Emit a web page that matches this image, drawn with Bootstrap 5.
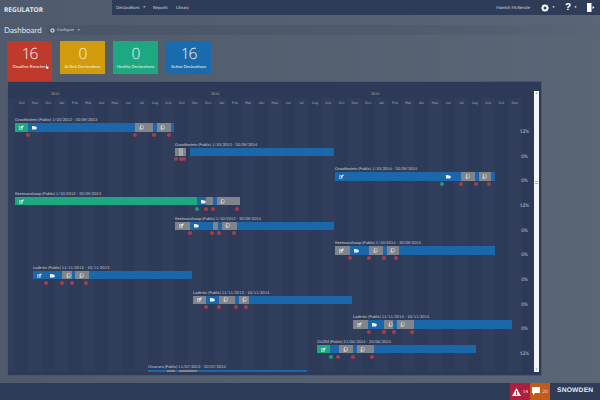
<!DOCTYPE html>
<html lang="en">
<head>
    <meta charset="UTF-8">
    <meta name="viewport" content="width=device-width, initial-scale=1.0">
    <title>Regulator Dashboard</title>
    <link href="https://cdn.jsdelivr.net/npm/bootstrap@5.3.0/dist/css/bootstrap.min.css" rel="stylesheet">
    <style>
        body {
            font-family: Lato, "Liberation Sans", sans-serif;
            text-rendering: geometricPrecision;
            background: linear-gradient(90deg, #4f5a6c, #5a6576);
            color: #d5dae2;
            width: 600px;
            height: 400px;
            overflow: hidden;
        }
        .top-bar { height: 15px; }
        .brand-name {
            width: 112px;
            padding-left: 4px;
            font-family: "Open Sans", sans-serif;
            font-size: 6.5px;
            font-weight: 700;
            line-height: 19px;
            color: #e4e7ec;
        }
        .top-menu {
            background: #2f3c57;
            font-size: 4.3px;
            line-height: 15px;
            color: #cdd3dc;
            padding-left: 4px;
        }
        .menu-first { width: 37px; }
        .menu-second { width: 23px; }
        .caret-down { font-size: 3px; vertical-align: 1px; margin-left: 3px; }
        .user-name { margin-right: 11px; }
        .top-icons { width: 59px; color: #fff; }
        .help-mark { font-size: 10px; font-weight: 700; line-height: 15px; margin-left: 10px; font-family: "Liberation Sans", sans-serif; }
        .exit-mark { margin-left: 10px; }
        .title-row { margin-top: 10px; height: 10px; }
        .page-title {
            width: 47px;
            padding-left: 4px;
            font-size: 7.9px;
            line-height: 10px;
            color: #e2e5ea;
        }
        .config-strip {
            padding-left: 3px;
            background: linear-gradient(90deg, #4a5568, #4f5a6c 60%, #59647500);
            font-size: 4px;
            line-height: 10px;
            color: #c8ced8;
        }
        .config-gear { margin-right: 2px; }
        .tile-row { margin: 6px 0 0 7px; gap: 8px; height: 40px; }
        .stat-tile {
            width: 45px;
            height: 33px;
            color: #f4f1e8;
            text-align: center;
            padding-top: 2px;
        }
        .stat-tile .stat-num { font-family: "Open Sans", sans-serif; font-size: 15.5px; letter-spacing: -1px; line-height: 20px; font-weight: 300; }
        .stat-tile .stat-text { font-size: 4.1px; line-height: 7px; white-space: nowrap; }
        .tile-red { background: #c03a2b; height: 40px; position: relative; }
        .tile-gold { background: #d09c0e; }
        .tile-green { background: #1ea881; }
        .tile-blue { background: #196bae; }
        .hand-cursor { position: absolute; left: 38px; top: 22px; width: 4px; height: 7px; }
        .chart-box {
            margin-left: 7px;
            width: 535px;
            height: 295px;
            border: 1px solid #8c3d4c;
            background: #2d3a57;
        }
        .chart-main { width: 526px; }
        .year-row { height: 16px; font-size: 3.6px; line-height: 24px; color: #a9b1c0; padding-left: 43px; }
        .year-cell { width: 160px; }
        .plot-area {
            height: 274px;
            overflow: hidden;
            background: repeating-linear-gradient(90deg, #2d3a58 7px 20.33px, #303e5c 20.33px 33.67px) 0 0 / 514px 100% no-repeat;
        }
        .month-row { height: 19px; padding-left: 7px; font-size: 3.6px; line-height: 10px; color: #a0a8b8; }
        .month-cell { width: 13.33px; text-align: center; flex: none; }
        .gantt-row { height: 24.67px; }
        .gantt-track { width: 507px; }
        .gantt-pct { width: 19px; text-align: center; font-size: 4.8px; line-height: 6px; padding-top: 12px; color: #c2c8d2; }
        .gantt-label { font-size: 3.98px; line-height: 6px; white-space: nowrap; color: #c9ced7; }
        .gantt-bar { height: 8.5px; background: #1a67ab; }
        .gantt-seg { height: 100%; flex: none; padding-left: 3.5px; color: #eef1f5; }
        .gantt-seg svg { display: block; width: 5px; height: 5px; margin-top: 1.75px; }
        .seg-g { background: #1ea881; }
        .seg-b { background: #1a67ab; }
        .seg-y { background: #80848b; }
        .seg-d { background: #2d3a57; }
        .seg-l { background: #a5a8ad; }
        .dot-strip { position: relative; height: 4px; margin-top: 1.25px; }
        .gantt-dot { position: absolute; top: 0; width: 4px; height: 4px; margin-left: -2px; border-radius: 50%; background: #a83c4a; }
        .dot-ok { background: #1f9a7c; }
        .scroll-rail {
            width: 5px;
            margin: 9px 2px 3px 0;
            background: #f4f5f7;
            color: #6d7482;
            font-size: 3px;
            line-height: 5px;
            text-align: center;
        }
        .scroll-grip { width: 3px; height: 4px; margin-top: 85px; background: repeating-linear-gradient(#aeb3bb 0 1px, #f4f5f7 1px 2px); }
        .foot-bar { margin-top: 7px; height: 17px; background: #2f3c57; }
        .foot-badge { width: 20px; font-size: 4.6px; gap: 2px; color: #e8dfe0; }
        .badge-red { background: #ad1f3e; }
        .badge-orange { background: #c25a1c; }
        .foot-logo { width: 50px; padding-left: 7px; font-size: 6.7px; font-weight: 700; letter-spacing: .2px; color: #e6e9ee; white-space: nowrap; font-family: "Liberation Sans", sans-serif; }
    </style>
</head>
<body>
    <svg class="d-none">
        <symbol id="ic-edit" viewBox="0 0 10 10"><path fill="currentColor" d="M0 3h6v1H1v4h5V6l1-1v4H0zM3 5l5-4 2 1-5 5H3z"/></symbol>
        <symbol id="ic-file" viewBox="0 0 10 10"><path fill="currentColor" d="M0 2h4l1 1h3l2 3-2 3H0z"/></symbol>
        <symbol id="ic-copy" viewBox="0 0 10 10"><path fill="none" stroke="currentColor" d="M3 .5h4l1.500 2v5h-5.500zM2 3v6.500h5"/></symbol>
        <symbol id="ic-gear" viewBox="0 0 10 10"><path fill="currentColor" fill-rule="evenodd" d="M5 0l1 1.300 2-.3.600 2L10 5 8.600 7 8 9l-2-.3L5 10 4 8.700 2 9l-.6-2L0 5l1.400-2L2 1l2 .3zM5 3.200a1.800 1.800 0 1 0 .01 0z"/></symbol>
    </svg>

    <div class="top-bar d-flex">
        <div class="brand-name">REGULATOR</div>
        <div class="top-menu flex-grow-1 d-flex">
            <span class="menu-first">Declarations<span class="caret-down">▼</span></span>
            <span class="menu-second">Reports</span>
            <span>Library</span>
            <span class="ms-auto user-name">Hamish McKenzie</span>
            <div class="top-icons d-flex align-items-center">
                <svg width="8" height="8"><use href="#ic-gear"/></svg>
                <span class="caret-down">▼</span>
                <span class="help-mark">?</span>
                <span class="caret-down">▼</span>
                <svg class="exit-mark" width="8" height="9" viewBox="0 0 8 9"><path fill="currentColor" d="M0 0h4.500v9H0zM5.500 3l2 1.500-2 1.500z"/></svg>
            </div>
        </div>
    </div>

    <div class="title-row d-flex">
        <div class="page-title">Dashboard</div>
        <div class="config-strip flex-grow-1 d-flex align-items-center">
            <svg class="config-gear" width="5" height="5"><use href="#ic-gear"/></svg>
            Configure<span class="caret-down">▼</span>
        </div>
    </div>

    <div class="tile-row d-flex align-items-start">
        <div class="stat-tile tile-red">
            <div class="stat-num">16</div>
            <div class="stat-text">Deadline Breaches</div>
            <svg class="hand-cursor" viewBox="0 0 10 14"><path fill="#fff" stroke="#222" stroke-width=".7" d="M3 1.500a1 1 0 0 1 2 0V6l4 1v4l-1 2.500H3L.5 8l2.500 1z"/></svg>
        </div>
        <div class="stat-tile tile-gold">
            <div class="stat-num">0</div>
            <div class="stat-text">At Risk Declarations</div>
        </div>
        <div class="stat-tile tile-green">
            <div class="stat-num">0</div>
            <div class="stat-text">Healthy Declarations</div>
        </div>
        <div class="stat-tile tile-blue">
            <div class="stat-num">16</div>
            <div class="stat-text">Active Declarations</div>
        </div>
    </div>

    <div class="chart-box d-flex">
        <div class="chart-main">
            <div class="year-row d-flex">
                <span class="year-cell">2013</span>
                <span class="year-cell">2014</span>
                <span class="year-cell">2015</span>
            </div>
            <div class="plot-area">
                <div id="months" class="month-row d-flex"></div>
                <div id="rows"></div>
            </div>
        </div>
        <div class="scroll-rail d-flex flex-column align-items-center">
            <span>▴</span>
            <span class="scroll-grip"></span>
            <span class="mt-auto">▾</span>
        </div>
    </div>

    <div class="foot-bar d-flex justify-content-end">
        <div class="foot-badge badge-red d-flex align-items-center justify-content-center">
            <svg width="9" height="8" viewBox="0 0 9 8"><path fill="#fff" fill-rule="evenodd" d="M4.500 0L9 8H0zM4 3v2.500h1V3zM4 6v1h1V6z"/></svg>14
        </div>
        <div class="foot-badge badge-orange d-flex align-items-center justify-content-center">
            <svg width="8" height="9" viewBox="0 0 8 9"><path fill="#fff" d="M0 0h8v6H3L1 8.500V6H0z"/></svg>20
        </div>
        <div class="foot-logo d-flex align-items-center">SNOWDEN</div>
    </div>

    <script src="https://cdn.jsdelivr.net/npm/bootstrap@5.3.0/dist/js/bootstrap.bundle.min.js"></script>
    <script>
        const monthNames = ['Oct','Nov','Dec','Jan','Feb','Mar','Apr','May','Jun','Jul','Aug','Sep'];
        const monthRow = document.getElementById('months');
        for (let i = 0; i < 38; i++) {
            const cell = document.createElement('span');
            cell.className = 'month-cell';
            cell.textContent = monthNames[i % 12];
            monthRow.appendChild(cell);
        }

        // x and w are in page pixels; segs are [colour, width, icon]; dots are [x, ok]
        const rows = [
            { label: 'Grootfontein (Public) 1/10/2012 - 30/09/2013', x: 15, w: 159, pct: '12%',
              segs: [['g',13,'edit'],['b',107,'file'],['y',18,'copy'],['b',1],['y',14,'copy']],
              dots: [[28],[135],[153.5],[169]] },
            { label: 'Grootfontein (Public) 1/10/2013 - 30/09/2014', x: 175, w: 159, pct: '0%',
              segs: [['y',4],['l',1],['y',3],['d',1]],
              dots: [[176],[181],[184]] },
            { label: 'Grootfontein (Public) 1/10/2014 - 30/09/2015', x: 335, w: 160, pct: '0%',
              segs: [['b',107,'edit'],['b',19,'file'],['y',14,'copy'],['b',1],['y',12,'copy']],
              dots: [[442,1],[461],[476],[489]] },
            { label: 'Keetmanshoop (Public) 1/10/2012 - 30/09/2013', x: 15, w: 222, pct: '12%',
              segs: [['g',182,'edit'],['b',9,'file'],['y',7],['b',1],['y',23,'copy']],
              dots: [[197,1],[206],[213],[237]] },
            { label: 'Keetmanshoop (Public) 1/10/2013 - 30/09/2014', x: 175, w: 159, pct: '0%',
              segs: [['y',15,'edit'],['b',23,'file'],['y',5],['b',1],['y',15,'copy']],
              dots: [[190],[212],[219],[234]] },
            { label: 'Keetmanshoop (Public) 1/10/2014 - 30/09/2015', x: 335, w: 160, pct: '0%',
              segs: [['y',15,'edit'],['b',19,'file'],['y',14,'copy'],['b',1],['y',12,'copy']],
              dots: [[350],[369],[384],[396]] },
            { label: 'Luderitz (Public) 11/11/2012 - 10/11/2013', x: 33, w: 159, pct: '0%',
              segs: [['b',13,'edit'],['b',16,'file'],['y',9.5,'copy'],['b',.5],['y',14,'copy']],
              dots: [[46],[62],[72],[86]] },
            { label: 'Luderitz (Public) 11/11/2013 - 10/11/2014', x: 193, w: 159, pct: '0%',
              segs: [['y',13,'edit'],['b',13,'file'],['y',16,'copy'],['b',1],['y',10,'copy']],
              dots: [[206],[219],[236],[246]] },
            { label: 'Luderitz (Public) 11/11/2014 - 10/11/2015', x: 353, w: 159, pct: '0%',
              segs: [['y',15,'edit'],['b',16,'file'],['y',9,'copy'],['b',1],['y',17,'copy']],
              dots: [[369],[384],[394],[412]] },
            { label: 'OLDM (Public) 21/06/2014 - 20/06/2015', x: 317, w: 159, pct: '12%',
              segs: [['g',13,'edit'],['b',9],['y',14,'copy'],['b',1],['y',17,'copy']],
              dots: [[331,1],[338],[353],[372]] },
            { label: 'Omaruru (Public) 11/07/2013 - 30/07/2014', x: 148, w: 159, pct: '',
              segs: [['b',19],['y',8],['b',1],['y',18]],
              dots: [] }
        ];

        const rowsBox = document.getElementById('rows');
        rows.forEach(row => {
            const segs = row.segs.map(s => {
                const icon = s[2] ? `<svg><use href="#ic-${s[2]}"/></svg>` : '';
                return `<div class="gantt-seg seg-${s[0]}" style="width:${s[1]}px">${icon}</div>`;
            }).join('');
            const dots = row.dots.map(d =>
                `<span class="gantt-dot${d[1] ? ' dot-ok' : ''}" style="left:${d[0] - row.x}px"></span>`
            ).join('');
            const el = document.createElement('div');
            el.className = 'gantt-row d-flex';
            el.innerHTML = `
                <div class="gantt-track">
                    <div style="margin-left:${row.x - 8}px;width:${row.w}px">
                        <div class="gantt-label">${row.label}</div>
                        <div class="gantt-bar d-flex">${segs}</div>
                        <div class="dot-strip">${dots}</div>
                    </div>
                </div>
                <div class="gantt-pct">${row.pct}</div>`;
            rowsBox.appendChild(el);
        });
    </script>
</body>
</html>
